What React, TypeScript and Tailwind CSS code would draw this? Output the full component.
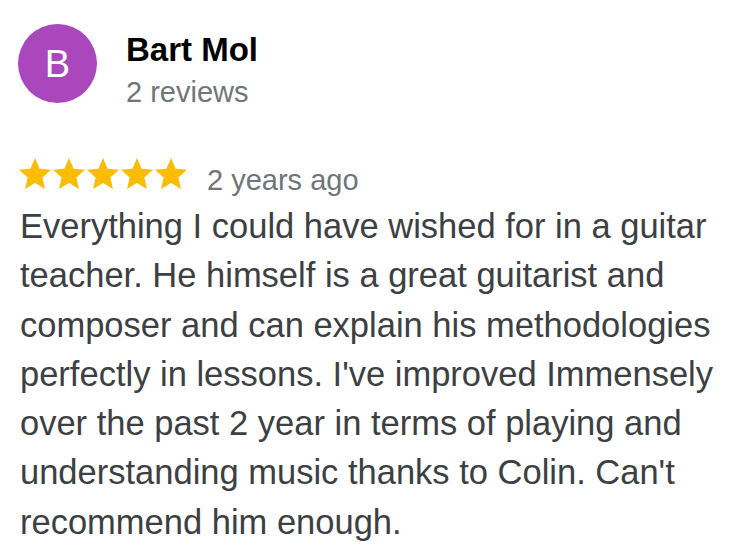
import React from "react";

const Star = () => (
  <svg width="32" height="31" viewBox="0.9 1.2 22.2 21" preserveAspectRatio="none" className="block">
    <path
      fill="#fbbc04"
      d="M12 1.2l3.2 7.3 7.9.7-6 5.2 1.8 7.8L12 18.1l-6.9 4.1 1.8-7.8-6-5.2 7.9-.7z"
    />
  </svg>
);

export default function App() {
  return (
    <div
      className="w-[730px] h-[552px] bg-white overflow-hidden"
      style={{ fontFamily: '"Liberation Sans", Arial, sans-serif' }}
    >
      <div className="flex items-start pt-[24px] pl-[18px]">
        <div className="w-[79px] h-[79px] rounded-full bg-[#ab47bc] flex items-center justify-center text-white text-[38px] leading-none">
          B
        </div>
        <div className="ml-[29px] pt-[7px]">
          <div className="text-[33px] leading-[38px] font-bold text-black">Bart Mol</div>
          <div className="text-[29px] leading-[36px] text-[#70757a] mt-[5px]">2 reviews</div>
        </div>
      </div>
      <div className="flex items-start pl-[19px] mt-[48px]">
        <div className="flex gap-[2px]">
          <Star />
          <Star />
          <Star />
          <Star />
          <Star />
        </div>
        <div className="ml-[20px] mt-[5px] text-[29px] leading-[34px] text-[#70757a]">2 years ago</div>
      </div>
      <div className="pl-[20px] mt-[5px] text-[34.5px] leading-[49.3px] text-[#3c4043]">
        Everything I could have wished for in a guitar teacher. He himself is a great guitarist and
        composer and can explain his methodologies perfectly in lessons. I've improved Immensely
        over the past 2 year in terms of playing and understanding music thanks to Colin. Can't
        recommend him enough.
      </div>
    </div>
  );
}
